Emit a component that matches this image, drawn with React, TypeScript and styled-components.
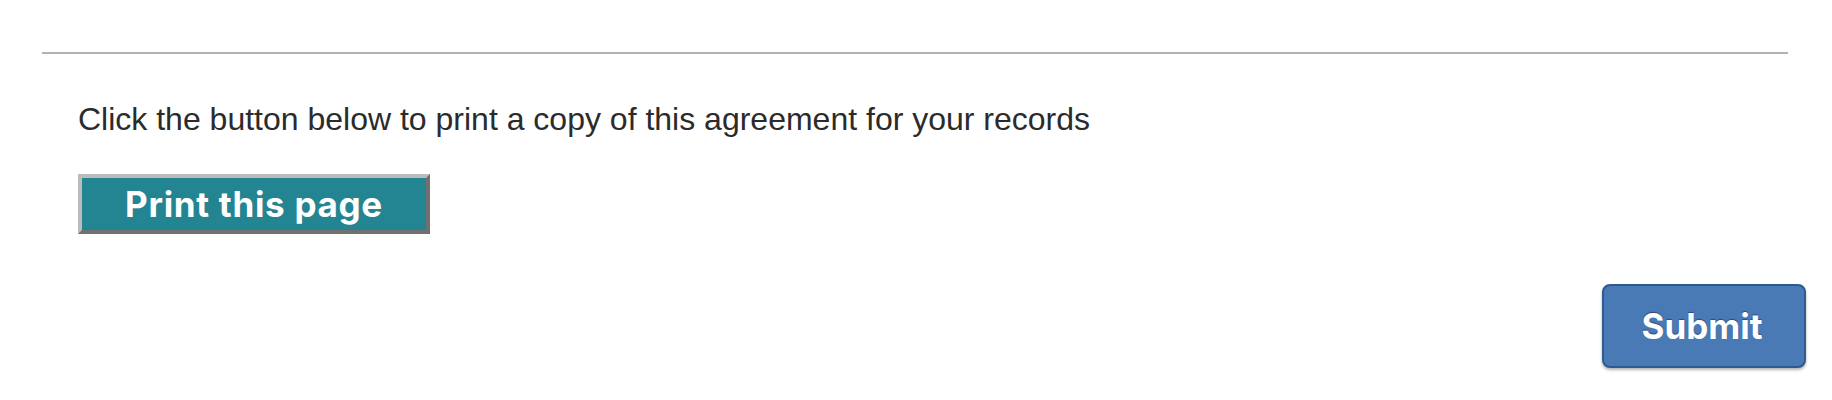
import React from "react";
import styled, { createGlobalStyle } from "styled-components";

const GlobalStyle = createGlobalStyle`
  html, body {
    margin: 0;
    padding: 0;
    background: #ffffff;
  }
  body {
    font-family: "Liberation Sans", Arial, sans-serif;
  }
`;

const Page = styled.div`
  width: 1832px;
  height: 400px;
  box-sizing: border-box;
  padding: 52px 26px 0 42px;
  display: flex;
  flex-direction: column;
`;

const Divider = styled.hr`
  margin: 0 18px 0 0;
  border: none;
  height: 2px;
  background: #b3b3b3;
`;

const Content = styled.div`
  display: flex;
  flex-direction: column;
  align-items: flex-start;
  padding: 47px 0 0 36px;
`;

const Instruction = styled.p`
  margin: 0;
  font-family: "Liberation Sans", Arial, sans-serif;
  font-size: 32px;
  line-height: 36px;
  color: #2b2b2b;
`;

const PrintButton = styled.button`
  margin-top: 37px;
  width: 352px;
  height: 60px;
  box-sizing: border-box;
  background: #238592;
  border-style: solid;
  border-width: 4px;
  border-color: #bcbcbc #707070 #707070 #bcbcbc;
  color: #ffffff;
  font-family: Inter, "Liberation Sans", sans-serif;
  font-weight: 700;
  font-size: 35px;
  letter-spacing: 0.7px;
  line-height: 1;
  padding: 0;
  cursor: pointer;
`;

const Footer = styled.div`
  display: flex;
  justify-content: flex-end;
  margin-top: 50px;
`;

const SubmitButton = styled.button`
  width: 204px;
  height: 84px;
  box-sizing: border-box;
  background: #4a7ab6;
  border: 2px solid #2d5b90;
  border-radius: 8px;
  box-shadow: 0 2px 3px rgba(0, 0, 0, 0.3);
  color: #ffffff;
  font-family: Inter, "Liberation Sans", sans-serif;
  font-weight: 700;
  font-size: 35px;
  line-height: 1;
  text-shadow: 0 -1px 1px rgba(20, 40, 80, 0.6);
  padding: 0 4px 0 0;
  cursor: pointer;
`;

export default function App() {
  return (
    <>
      <GlobalStyle />
      <Page>
        <Divider />
        <Content>
          <Instruction>
            Click the button below to print a copy of this agreement for your records
          </Instruction>
          <PrintButton type="button">Print this page</PrintButton>
        </Content>
        <Footer>
          <SubmitButton type="button">Submit</SubmitButton>
        </Footer>
      </Page>
    </>
  );
}
